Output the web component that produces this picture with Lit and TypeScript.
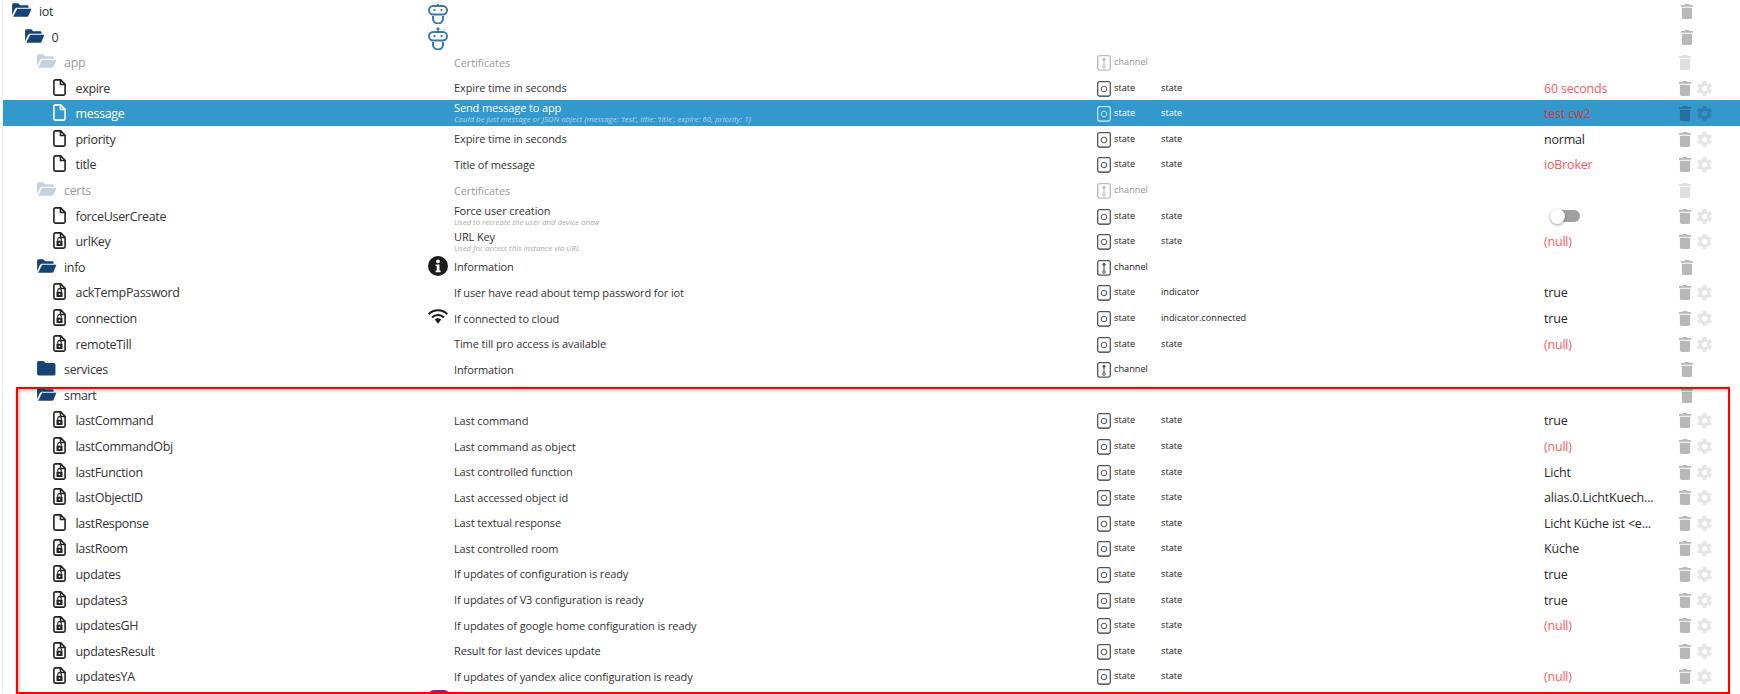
import { LitElement, html, css, svg } from "lit";
import { customElement } from "lit/decorators.js";

type Kind = "open" | "closed" | "file" | "lock";
interface Row {
  name: string; level: number; kind: Kind; desc?: string; sub?: string; type?: "state" | "channel";
  role?: string; value?: string; vcls?: string; icon?: string; gear?: boolean; dim?: boolean; sel?: boolean; toggle?: boolean;
}

const st = (name: string, kind: Kind, desc: string, value = "", vcls = "", extra: Partial<Row> = {}): Row =>
  ({ name, level: 3, kind, desc, type: "state", role: "state", value, vcls, gear: true, ...extra });

const rows: Row[] = [
  { name: "iot", level: 0, kind: "open", icon: "robot" },
  { name: "0", level: 1, kind: "open", icon: "robot2" },
  { name: "app", level: 2, kind: "open", desc: "Certificates", type: "channel", dim: true },
  st("expire", "file", "Expire time in seconds", "60 seconds", "red"),
  st("message", "file", "Send message to app", "test cw2", "red", { sel: true, sub: "Could be just message or JSON object {message: 'test', title: 'title', expire: 60, priority: 1}" }),
  st("priority", "file", "Expire time in seconds", "normal"),
  st("title", "file", "Title of message", "ioBroker", "red"),
  { name: "certs", level: 2, kind: "open", desc: "Certificates", type: "channel", dim: true },
  st("forceUserCreate", "file", "Force user creation", "", "", { sub: "Used to recreate the user and device anew", toggle: true }),
  st("urlKey", "lock", "URL Key", "(null)", "red", { sub: "Used for access this instance via URL" }),
  { name: "info", level: 2, kind: "open", desc: "Information", type: "channel", icon: "info" },
  st("ackTempPassword", "lock", "If user have read about temp password for iot", "true", "", { role: "indicator" }),
  st("connection", "lock", "If connected to cloud", "true", "", { role: "indicator.connected", icon: "wifi" }),
  st("remoteTill", "lock", "Time till pro access is available", "(null)", "red"),
  { name: "services", level: 2, kind: "closed", desc: "Information", type: "channel" },
  { name: "smart", level: 2, kind: "open" },
  st("lastCommand", "lock", "Last command", "true"),
  st("lastCommandObj", "lock", "Last command as object", "(null)", "red"),
  st("lastFunction", "lock", "Last controlled function", "Licht"),
  st("lastObjectID", "lock", "Last accessed object id", "alias.0.LichtKuech..."),
  st("lastResponse", "file", "Last textual response", "Licht Küche ist <e..."),
  st("lastRoom", "lock", "Last controlled room", "Küche"),
  st("updates", "lock", "If updates of configuration is ready", "true"),
  st("updates3", "lock", "If updates of V3 configuration is ready", "true"),
  st("updatesGH", "lock", "If updates of google home configuration is ready", "(null)", "red"),
  st("updatesResult", "lock", "Result for last devices update"),
  st("updatesYA", "lock", "If updates of yandex alice configuration is ready", "(null)", "red"),
  { name: "", level: 2, kind: "closed", icon: "purple" },
];

const folderOpen = svg`<svg class="folder" viewBox="0 0 20 15"><path fill="currentColor" d="M0 2.200C0 1 .8.300 1.800.300h4.600l2 2h7c1 0 1.700.7 1.700 1.700v.8H5.200C4 4.800 3.200 5.400 2.800 6.400L0 12.600z"/><path fill="currentColor" d="M5.300 5.900H20l-3 7.300c-.3.700-.9 1.100-1.600 1.100H1z"/></svg>`;
const folderClosed = svg`<svg class="folder" viewBox="0 0 20 15"><path fill="currentColor" d="M0 1.800C0 .8.800 0 1.800 0h5l2 2h8.400c1 0 1.800.8 1.800 1.800v9.400c0 1-.8 1.800-1.800 1.800H1.800C.8 15 0 14.200 0 13.200z"/></svg>`;
const fileIcon = svg`<svg class="file" viewBox="0 0 13 17"><path fill="none" stroke="currentColor" stroke-width="1.600" d="M2.400.9h5.300l4.400 4.400v9.300c0 .9-.7 1.500-1.500 1.500H2.400c-.8 0-1.500-.6-1.500-1.500V2.400C.9 1.600 1.600.9 2.400.9zM7.500 1v4.500h4.500"/></svg>`;
const lockIcon = svg`<svg class="file" viewBox="0 0 13 17"><path fill="none" stroke="currentColor" stroke-width="1.600" d="M2.400.9h5.300l4.400 4.400v9.300c0 .9-.7 1.500-1.500 1.500H2.400c-.8 0-1.500-.6-1.500-1.500V2.400C.9 1.600 1.600.9 2.400.9zM7.500 1v4.500h4.500"/><path fill="currentColor" d="M3.500 8.700h6v5.300h-6z"/><path fill="none" stroke="currentColor" stroke-width="1.100" d="M4.700 8.800V7.400a1.800 1.800 0 0 1 3.600 0v1.400"/><circle cx="6.500" cy="11.300" r=".9" fill="#fff"/></svg>`;
const robot = svg`<svg class="robot" viewBox="0 0 20 20"><g fill="none" stroke="#3577b8" stroke-width="2"><rect x="1" y="2" width="18" height="8.500" rx="4.200"/><path d="M5 12v2.500a5 5 0 0 0 10 0V12"/></g><path d="M9 0h2v2H9z" fill="#3577b8"/><circle cx="6.500" cy="6.200" r="1.100" fill="#3577b8"/><circle cx="13.500" cy="6.200" r="1.100" fill="#3577b8"/></svg>`;
const robot2 = svg`<svg class="robot r2" viewBox="0 0 20 23"><g fill="none" stroke="#3577b8" stroke-width="2"><rect x="1" y="5" width="18" height="8.500" rx="4.200"/><path d="M5 15v2.500a5 5 0 0 0 10 0V15"/></g><circle cx="10" cy="1.800" r="1.600" fill="#3577b8"/><path d="M9.300 2h1.400v3H9.300z" fill="#3577b8"/><path d="M16 3l1-1M18 1.500l1-1" stroke="#7aa6d3" stroke-width="1"/><circle cx="6.500" cy="9.200" r="1.100" fill="#3577b8"/><circle cx="13.500" cy="9.200" r="1.100" fill="#3577b8"/></svg>`;
const info = svg`<svg class="info" viewBox="0 0 20 20"><circle cx="10" cy="10" r="10" fill="#1b1b1b"/><circle cx="10" cy="5.400" r="1.900" fill="#fff"/><path fill="#fff" d="M7.600 8.400h3.900v6.100h1.100v1.700H7.600v-1.700h1.100v-4.400H7.600z"/></svg>`;
const wifi = svg`<svg class="wifi" viewBox="0 0 20 15"><g fill="none" stroke="#1b1b1b" stroke-width="2"><path d="M.7 5.200a13.200 13.200 0 0 1 18.600 0"/><path d="M4 8.500a8.500 8.500 0 0 1 12 0"/></g><path fill="#1b1b1b" d="M6.800 10.500a4.500 4.500 0 0 1 6.400 0L10 14.800z"/></svg>`;
const stateIcon = svg`<svg class="type" viewBox="0 0 14 16"><rect x=".7" y=".7" width="12.600" height="14.400" rx="1.800" fill="none" stroke="currentColor" stroke-width="1.300" /><path d="M2 15.300h10" stroke="currentColor" stroke-width="1.200" opacity=".7"/><circle cx="7" cy="8" r="2.800" fill="none" stroke="currentColor" stroke-width="1"/></svg>`;
const channelIcon = svg`<svg class="type" viewBox="0 0 14 16"><rect x=".7" y=".7" width="12.600" height="14.400" rx="1.800" fill="none" stroke="currentColor" stroke-width="1.300"/><circle cx="7" cy="4.300" r="1.500" fill="currentColor"/><path d="M7 5v6" stroke="currentColor" stroke-width="1.100"/><circle cx="7" cy="12" r="1.300" fill="none" stroke="currentColor" stroke-width="1"/></svg>`;
const trash = svg`<svg class="trash" viewBox="0 0 12 15"><path fill="currentColor" d="M4 0h4l.6 1H12v1.700H0V1h3.400zM.9 3.700h10.200V13.300c0 .9-.8 1.700-1.700 1.700H2.600C1.700 15 .9 14.200 .9 13.300z"/></svg>`;
const gear = svg`<svg class="gear" viewBox="2 2 20 20"><path fill="currentColor" fill-rule="evenodd" d="M19.400 13c.1-.3.1-.7.1-1s0-.7-.1-1l2.100-1.600c.2-.2.2-.4.100-.6l-2-3.500c-.1-.2-.4-.3-.6-.2l-2.500 1c-.5-.4-1.100-.7-1.700-1L14.500 2.400c0-.2-.2-.4-.5-.4h-4c-.3 0-.5.200-.5.400l-.4 2.700c-.6.200-1.200.6-1.700 1l-2.500-1c-.2-.1-.5 0-.6.2l-2 3.500c-.1.200-.1.400.1.600L4.500 11c0 .3-.1.700-.1 1s0 .7.1 1l-2.100 1.600c-.2.200-.2.400-.1.600l2 3.500c.1.200.4.300.6.200l2.500-1c.5.400 1.100.7 1.700 1l.4 2.700c0 .2.200.4.500.4h4c.3 0 .5-.2.5-.4l.4-2.700c.6-.2 1.200-.6 1.700-1l2.500 1c.2.100.5 0 .6-.2l2-3.500c.1-.2.1-.4-.1-.6zM12 15.500a3.500 3.500 0 1 1 0-7 3.500 3.500 0 0 1 0 7z"/></svg>`;

const ICONS: Record<string, unknown> = { robot, robot2, info, wifi };

@customElement("app-root")
export class AppRoot extends LitElement {
  static styles = css`
    :host { display: block; position: relative; width: 1740px; height: 694px; overflow: hidden; background: #fff; font-family: "Open Sans", "Noto Sans", sans-serif; color: #222; }
    .list { margin-top: -2.4px; margin-left: 2px; border-left: 1px solid #f0f0f0; display: flex; flex-direction: column; }
    .row { height: 25.6px; display: grid; grid-template-columns: 425px 26px 643px 17px 47px 383px 135px 18px 15px; align-items: center; }
    .row.sel { background: #3399cc; color: #fff; }
    .name { display: flex; align-items: center; font-size: 12.5px; letter-spacing: -0.32px; white-space: nowrap; color: #333; }
    .label { margin-top: 2px; }
    .sel .name { color: #fff; }
    .ibox { display: flex; flex: none; letter-spacing: 0; }
    .ibox.f { width: 27px; color: #164477; }
    .ibox.d { width: 22.500px; color: #222; }
    .sel .ibox.d { color: #fff; }
    .folder { width: 19.500px; height: 14.500px; }
    .file { width: 13px; height: 17px; }
    .dim .name, .dim .desc, .dim .tname { opacity: 0.5; }
    .dim .ibox.f { opacity: 0.48; }
    .ico { display: flex; align-items: center; }
    .robot { width: 20px; height: 20px; margin-top: 6px; }
    .robot.r2 { width: 20px; height: 23px; margin-top: 4px; }
    .info { width: 20px; height: 20px; }
    .wifi { width: 20px; height: 15px; margin-top: -2px; }
    .purple { width: 22px; height: 22px; border-radius: 6px; background: #7b2a9c; }
    .desc { font-size: 11px; letter-spacing: -0.12px; line-height: 13px; white-space: nowrap; color: #333; display: flex; flex-direction: column; margin-top: 1px; }
    .sel .desc { color: #fff; margin-top: 0; }
    .sub { font-size: 7.800px; letter-spacing: 0; line-height: 9px; font-style: italic; color: #aaa; margin-top: 1px; }
    .sel .sub { color: #a9d6ee; }
    .type { width: 14px; height: 16px; color: #555; margin-top: 3px; }
    .sel .type { color: #bfe3f5; }
    .dim .type { color: #bbb; }
    .tname, .role { font-size: 9.200px; white-space: nowrap; color: #222; margin-top: 0; }
    .sel .tname, .sel .role { color: #fff; }
    .val { font-size: 12.500px; letter-spacing: -0.2px; white-space: nowrap; color: #2a2a2a; margin-top: 2px; }
    .val.red { color: #ff5a60; }
    .sel .val.red { color: #d2384a; }
    .tr { display: flex; color: #b8b8b8; margin-top: 2px; }
    .trash { width: 12px; height: 15px; }
    .tr.folder-t { padding-left: 2px; }
    .dim .tr { color: #e0e0e0; padding-left: 0; }
    .sel .tr { color: #296f9e; }
    .ge { display: flex; color: #e6e6e6; margin-top: 2px; }
    .gear { width: 15px; height: 15px; }
    .sel .ge { color: #2d7eb0; }
    .toggle { position: relative; width: 30px; height: 16px; margin: 1px 0 0 6px; }
    .track { position: absolute; left: 4px; top: 1px; width: 26px; height: 12px; border-radius: 6px; background: #a0a0a0; }
    .knob { position: absolute; left: 0; top: 0; width: 15px; height: 15px; border-radius: 50%; background: #fff; box-shadow: 0 1px 3px rgba(0,0,0,.4); }
    .mark { position: absolute; left: 16px; top: 387px; width: 1714px; height: 307px; box-sizing: border-box; border: 2px solid #f00; box-shadow: 0 2px 2px rgba(0,0,0,.25), inset 2px 2px 3px rgba(0,0,0,.22); pointer-events: none; }
  `;

  private renderRow(r: Row) {
    const isFolder = r.kind === "open" || r.kind === "closed";
    const pad = isFolder ? 9 + r.level * 12.5 : 50;
    const iconTpl = r.icon === "purple" ? html`<div class="purple"></div>` : r.icon ? ICONS[r.icon] : "";
    const kindIcon = r.kind === "open" ? folderOpen : r.kind === "closed" ? folderClosed : r.kind === "file" ? fileIcon : lockIcon;
    const last = r.name === "";
    return html`<div class="row ${r.sel ? "sel" : ""} ${r.dim ? "dim" : ""}">
      <div class="name" style="padding-left:${pad}px">${last ? "" : html`<span class="ibox ${isFolder ? "f" : "d"}">${kindIcon}</span>`}<span class="label">${r.name}</span></div>
      <div class="ico">${iconTpl}</div>
      <div class="desc">${r.desc ?? ""}${r.sub ? html`<span class="sub">${r.sub}</span>` : ""}</div>
      <div class="ico">${r.type === "state" ? stateIcon : r.type === "channel" ? channelIcon : ""}</div>
      <div class="tname">${r.type ?? ""}</div>
      <div class="role">${r.role ?? ""}</div>
      <div class="val ${r.vcls ?? ""}">${r.toggle ? html`<div class="toggle"><span class="track"></span><span class="knob"></span></div>` : r.value ?? ""}</div>
      <div class="tr ${r.gear ? "" : "folder-t"}">${last ? "" : trash}</div>
      <div class="ge">${r.gear ? gear : ""}</div>
    </div>`;
  }

  render() {
    return html`<div class="list">${rows.map((r) => this.renderRow(r))}</div><div class="mark"></div>`;
  }
}
